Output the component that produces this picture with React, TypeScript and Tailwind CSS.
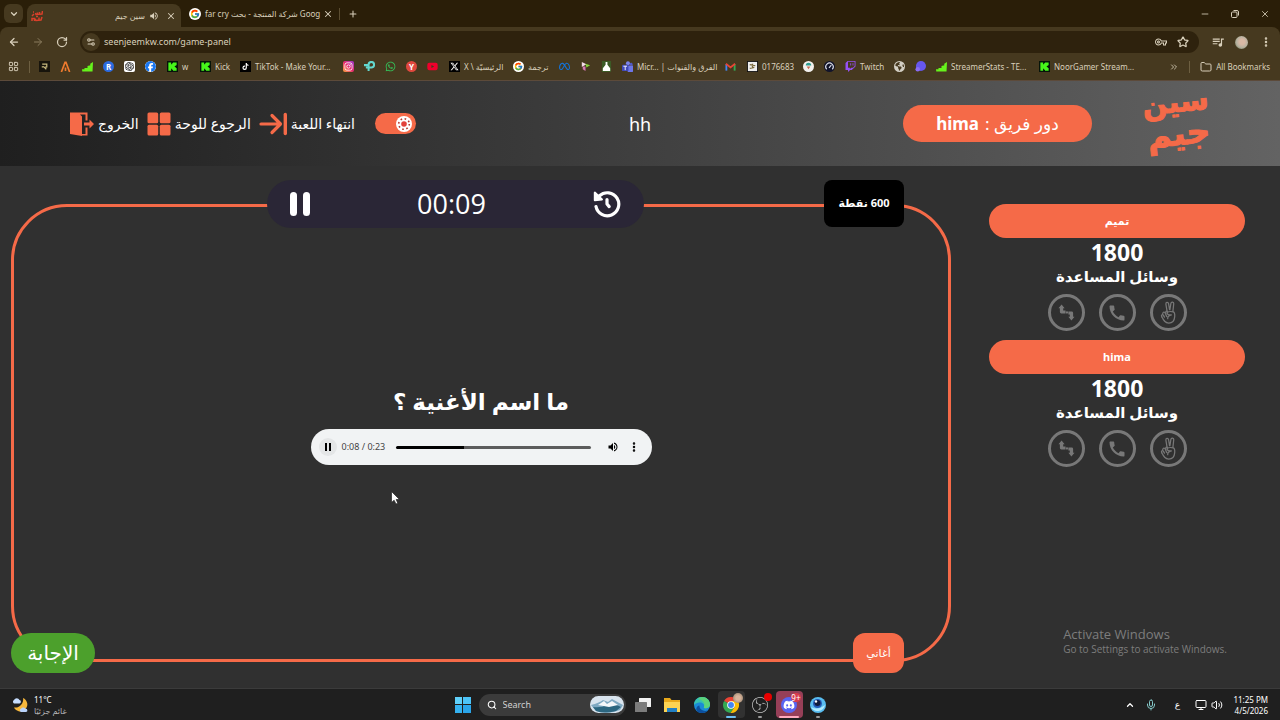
import type { ReactNode } from "react";
import {
  ArrowLeft,
  ArrowRight,
  ChevronDown,
  ChevronUp,
  ChevronsRight,
  EllipsisVertical,
  Folder,
  LayoutGrid,
  Mic,
  Minus,
  Monitor,
  Plus,
  RotateCw,
  Search,
  Settings2,
  Star,
  Volume2,
  X,
} from "lucide-react";
import {
  FaDiscord,
  FaEarthAmericas,
  FaFacebook,
  FaInstagram,
  FaMeta,
  FaTiktok,
  FaTwitch,
  FaWhatsapp,
  FaXTwitter,
  FaYoutube,
} from "react-icons/fa6";
import { FcGoogle } from "react-icons/fc";
import { MdCall, MdOutlineVpnKey, MdQueueMusic, MdVolumeUp } from "react-icons/md";
import { SiObsstudio, SiOpenai } from "react-icons/si";

type Bookmark = { name: string; icon: ReactNode; text?: string; width?: string };

const KickIcon = () => (
  <svg viewBox="0 0 12 12" className="size-[11px]">
    <rect width="12" height="12" fill="#06140a" />
    <path d="M1.500 1.500h3v2h1v-1h1v-1h4v3h-1v1h-1v1h1v1h1v3h-4v-1h-1v-1h-1v2h-3z" fill="#46f51a" />
  </svg>
);

const BarsIcon = () => (
  <svg viewBox="0 0 12 12" className="size-[11px]" fill="#66f31c">
    <path d="M0 9h2.700v2.500H.3zM2.700 7.500h3.300v4h-3.300zM6 5.500l3-1v7H6zM9 3L12 1l-.5 10.500H9z" />
  </svg>
);

const SiteIcon = () => (
  <svg viewBox="0 0 12 12" className="size-3" stroke="#d8402b" fill="none" strokeWidth="1.500">
    <path d="M11.500 1L11 4 5 4.500 4.500 3M8.500 2v2M6.500 2.500v2M3 4L1 6M2 2h1M11 7l-1 3-5 .5L4 9M8 7.500v2M1 11V8.500h2.500V11M5 6.500h2" />
  </svg>
);

const bookmarks: Bookmark[] = [
  {
    name: "Rewards",
    icon: (
      <svg viewBox="0 0 12 12" className="size-[11px]">
        <rect width="12" height="12" fill="#17140c" />
        <path d="M3.500 3.500h5v3L6 7l2 2M3 6.500h2.500" stroke="#c9bb80" fill="none" strokeWidth="1.300" />
      </svg>
    ),
  },
  {
    name: "Peaks",
    icon: (
      <svg viewBox="0 0 12 12" className="size-[11px]" fill="none" stroke="#f07b2e" strokeWidth="1.800">
        <path d="M1.500 12L5.500 1.500h1L10.500 12M6 7v4" />
      </svg>
    ),
    width: "w-3",
  },
  { name: "Stats", icon: <BarsIcon /> },
  {
    name: "R",
    icon: (
      <span className="flex size-[11px] items-center justify-center rounded-full bg-[#2c6be0] text-[8px] leading-none font-bold text-white">
        R
      </span>
    ),
  },
  { name: "ChatGPT", icon: <SiOpenai className="size-[11px] rounded-xs bg-white p-px text-black" /> },
  {
    name: "Facebook",
    icon: <FaFacebook className="size-[11px] rounded-full bg-white text-[#1877f2]" />,
    width: "w-3",
  },
  { name: "Kick w", icon: <KickIcon />, text: "w", width: "w-[23px]" },
  { name: "Kick", icon: <KickIcon />, text: "Kick", width: "w-[30px]" },
  {
    name: "TikTok",
    icon: <FaTiktok className="size-[11px] bg-black p-0.5 text-white" />,
    text: "TikTok - Make Your...",
    width: "w-[93px]",
  },
  {
    name: "Instagram",
    icon: (
      <FaInstagram className="size-[11px] rounded-xs bg-linear-to-tr from-[#fca02f] via-[#e8246f] to-[#9a2fd0] p-px text-white" />
    ),
  },
  {
    name: "Tip",
    icon: (
      <svg viewBox="0 0 12 12" className="size-[11px]" fill="none" stroke="#63d8cf" strokeWidth="2.200">
        <path d="M0 4.500h5M5 11V4a3 3 0 1 1 3 3H2" />
      </svg>
    ),
  },
  { name: "WhatsApp", icon: <FaWhatsapp className="size-[11px] text-[#35c25a]" /> },
  {
    name: "Y",
    icon: (
      <span className="flex size-[11px] items-center justify-center rounded-full bg-[#e0483e] text-[8px] leading-none font-bold text-white">
        Y
      </span>
    ),
  },
  { name: "YouTube", icon: <FaYoutube className="size-[11px] text-[#f0002c]" />, width: "w-3" },
  {
    name: "X",
    icon: <FaXTwitter className="size-[11px] bg-black p-px text-white" />,
    text: "X \\ الرئيسيّة",
    width: "w-[54px]",
  },
  {
    name: "Google",
    icon: <FcGoogle className="size-[11px] rounded-full bg-white p-px" />,
    text: "ترجمة",
    width: "w-[36px]",
  },
  { name: "Meta", icon: <FaMeta className="size-[11px] text-[#1473d8]" /> },
  {
    name: "Play",
    icon: (
      <svg viewBox="0 0 12 12" className="size-[11px]">
        <path d="M2 1l5 2.500-5 3z" fill="#f3d9e8" />
        <path d="M6 3l5 1.500L7 7z" fill="#86d43c" />
        <path d="M3 6h3v5L3 9z" fill="#d477b5" />
      </svg>
    ),
  },
  {
    name: "Flask",
    icon: (
      <svg viewBox="0 0 12 12" className="size-[11px]">
        <rect x="1" width="10" height="12" fill="#3c5a26" />
        <path d="M5 1h2v3l3 4v3H2V8l3-4z" fill="#fff" />
      </svg>
    ),
  },
  {
    name: "Teams",
    icon: (
      <svg viewBox="0 0 12 12" className="size-[11px]">
        <circle cx="6.500" cy="2.500" r="2.200" fill="#7b83eb" />
        <circle cx="10" cy="3.500" r="1.500" fill="#5059c9" />
        <path d="M4 5h8v4a3 3 0 0 1-6 2z" fill="#6d76e8" />
        <rect y="4" width="7" height="7" rx="1" fill="#4048b8" />
        <path d="M1.500 5.700h4M3.500 6v4" stroke="#fff" />
      </svg>
    ),
    text: "Micr... | الفرق والقنوات",
    width: "w-[93px]",
  },
  {
    name: "Gmail",
    icon: (
      <svg viewBox="0 0 12 12" className="size-[11px]" fill="none" strokeWidth="2">
        <path d="M1.500 10.500v-7" stroke="#4285f4" />
        <path d="M10.500 10.500v-7" stroke="#34a853" />
        <path d="M1 3l5 4 5-4" stroke="#ea4335" />
      </svg>
    ),
    width: "w-3",
  },
  {
    name: "0176683",
    icon: (
      <svg viewBox="0 0 12 12" className="size-[11px]">
        <rect width="12" height="12" fill="#111" />
        <rect x="1" y="1" width="10" height="10" fill="#eee" />
        <path d="M3 4l6 1M3 8l5-1M6 3v5" stroke="#7b6a3c" strokeWidth="1.500" />
      </svg>
    ),
    text: "0176683",
    width: "w-[46px]",
  },
  {
    name: "Profile",
    icon: (
      <svg viewBox="0 0 12 12" className="size-[11px]">
        <circle cx="6" cy="6" r="6" fill="#f3f1ee" />
        <path d="M3 5a3 3 0 0 1 6 0z" fill="#2d9c8f" />
        <path d="M4 6h4l-2 3z" fill="#c9694f" />
      </svg>
    ),
  },
  {
    name: "Gauge",
    icon: (
      <svg viewBox="0 0 12 12" className="size-[11px]" fill="none" stroke="#d9dce8">
        <circle cx="6" cy="6" r="6" fill="#12142a" stroke="none" />
        <path d="M3 9a4 4 0 1 1 6 0M5.500 7.500L8 4.500" strokeWidth="1.300" />
      </svg>
    ),
  },
  {
    name: "Twitch",
    icon: <FaTwitch className="size-[11px] text-[#9650f5]" />,
    text: "Twitch",
    width: "w-[39px]",
  },
  { name: "Web", icon: <FaEarthAmericas className="size-[11px] text-[#d3cfc4]" /> },
  {
    name: "Orb",
    icon: (
      <svg viewBox="0 0 12 12" className="size-[11px]">
        <circle cx="6.500" cy="5.500" r="5.500" fill="#6657ee" />
        <circle cx="3" cy="9" r="2.500" fill="#8a6cf5" />
      </svg>
    ),
  },
  { name: "StreamerStats", icon: <BarsIcon />, text: "StreamerStats - TE...", width: "w-[93px]" },
  { name: "NoorGamer", icon: <KickIcon />, text: "NoorGamer Stream...", width: "w-[93px]" },
];

const BrowserChrome = () => (
  <div className="bg-[#2a1e08] text-[#d9d0bb]">
    <div className="flex h-[27px] items-end justify-between">
      <div className="flex h-full items-center">
        <button aria-label="Search tabs" className="ml-1 flex size-[19px] items-center justify-center rounded-md bg-[#46391f]">
          <ChevronDown className="size-2.5" strokeWidth={3} />
        </button>
        <div className="ml-1 flex h-[23px] w-[154px] items-center self-end rounded-t-lg bg-[#46391f] px-1 text-[8px]">
          <SiteIcon />
          <span dir="rtl" className="ml-auto">
            سين جيم
          </span>
          <MdVolumeUp className="ml-1 size-2.5" />
          <button aria-label="Close tab" className="ml-1.5 flex size-3 items-center justify-center">
            <X className="size-2.5" strokeWidth={2.5} />
          </button>
        </div>
        <div className="flex w-[154px] items-center pl-2 text-[8px]">
          <FcGoogle className="size-3 shrink-0 rounded-full bg-white p-px" />
          <span className="ml-1 w-[117px] whitespace-nowrap">far cry شركة المنتجة - بحث Goog</span>
          <button aria-label="Close tab" className="flex size-3 items-center justify-center">
            <X className="size-2.5" strokeWidth={2.5} />
          </button>
        </div>
        <span className="mx-1 h-3 w-px bg-[#5b4d31]" />
        <button aria-label="New tab" className="ml-1">
          <Plus className="size-2.5" strokeWidth={2.5} />
        </button>
      </div>
      <div className="flex h-full items-center gap-5 pr-2.5">
        <button aria-label="Minimize">
          <Minus className="size-2.5" />
        </button>
        <button aria-label="Restore">
          <svg viewBox="0 0 10 10" className="size-2.5" fill="none" stroke="currentColor">
            <rect x="1.500" y="3" width="5.500" height="5.500" rx="1" />
            <path d="M3.500 1.500H7A1.500 1.500 0 0 1 8.500 3v3.500" />
          </svg>
        </button>
        <button aria-label="Close">
          <X className="size-2.5" />
        </button>
      </div>
    </div>

    <div className="flex h-[30px] items-center rounded-t-lg bg-[#46391f] pr-2">
      <button aria-label="Back" className="ml-2">
        <ArrowLeft className="size-3" strokeWidth={2.5} />
      </button>
      <button aria-label="Forward" className="ml-3 text-[#8a7c5e]">
        <ArrowRight className="size-3" />
      </button>
      <button aria-label="Reload" className="ml-3">
        <RotateCw className="size-3" strokeWidth={2.5} />
      </button>
      <div className="ml-3 flex h-[22px] flex-1 items-center rounded-full bg-[#2e220d] pr-2.5 pl-0.5">
        <span className="flex size-[18px] items-center justify-center rounded-full bg-[#46391f]">
          <Settings2 className="size-2.5" strokeWidth={2.5} />
        </span>
        <input
          aria-label="Address"
          className="ml-1 flex-1 text-[9px] outline-none"
          defaultValue="seenjeemkw.com/game-panel"
        />
        <MdOutlineVpnKey className="size-3" />
        <Star className="ml-2.5 size-3" strokeWidth={2.5} />
      </div>
      <MdQueueMusic className="ml-3 size-3.5" />
      <span className="ml-2.5 size-[13px] rounded-full bg-[radial-gradient(circle_at_55%_45%,#d9b9a5_25%,#b7b2a0_55%,#5a6b45)]" />
      <EllipsisVertical className="ml-3 size-3" strokeWidth={3} />
    </div>

    <div className="flex h-6 items-center gap-2.5 overflow-hidden border-b border-[#5c4a3a] bg-[#46391f] pr-2.5 pb-1 pl-2 text-[8px] whitespace-nowrap">
      <LayoutGrid className="size-[11px] shrink-0" />
      <span className="-mr-px h-3 w-px shrink-0 bg-[#6d5f41]" />
      {bookmarks.map((b) => (
        <a
          key={b.name}
          href="#"
          aria-label={b.name}
          className={`flex shrink-0 items-center gap-1 [&>svg]:shrink-0 ${b.width ?? "w-[11px]"}`}
        >
          {b.icon}
          {b.text && <span>{b.text}</span>}
        </a>
      ))}
      <ChevronsRight className="ml-auto size-2.5 shrink-0" />
      <span className="h-3 w-px shrink-0 bg-[#6d5f41]" />
      <a href="#" className="flex shrink-0 items-center gap-1">
        <Folder className="size-3" />
        All Bookmarks
      </a>
    </div>
  </div>
);

const ExitIcon = () => (
  <svg viewBox="0 0 24 24" className="size-6 shrink-0" fill="#f56a48">
    <path d="M0 .5h17.500v8h-2V2.500H10l2 2v17.500h3.500v-6.500h2V23.500h-5.500V24L0 22z" />
    <path d="M14 10.500h5.500V7.500L24 12l-4.500 4.500v-3H14z" />
  </svg>
);

const BoardIcon = () => (
  <svg viewBox="0 0 24 24" className="size-6 shrink-0" fill="#f56a48">
    <rect x=".5" y=".5" width="10.700" height="10.700" rx="1.500" />
    <rect x="12.800" y=".5" width="10.700" height="10.700" rx="1.500" />
    <rect x=".5" y="12.800" width="10.700" height="10.700" rx="1.500" />
    <rect x="12.800" y="12.800" width="10.700" height="10.700" rx="1.500" />
  </svg>
);

const EndIcon = () => (
  <svg
    viewBox="0 0 28 24"
    className="h-6 w-7 shrink-0"
    fill="none"
    stroke="#f56a48"
    strokeWidth="3.200"
    strokeLinecap="round"
    strokeLinejoin="round"
  >
    <path d="M2 12h19M13 3.500l8.500 8.500L13 20.500" />
    <path d="M26.300 2.500v19" strokeWidth="3.400" />
  </svg>
);

const GameHeader = () => (
  <header className="grid h-[85px] grid-cols-[1fr_auto_1fr] items-center bg-linear-to-r from-[#1f1f1f] to-[#636363] px-[70px] text-white">
    <div className="flex items-center gap-2 text-[14px] whitespace-nowrap">
      <button className="flex items-center gap-1">
        <ExitIcon />
        <span>الخروج</span>
      </button>
      <button className="flex items-center gap-1">
        <BoardIcon />
        <span>الرجوع للوحة</span>
      </button>
      <button className="flex items-center gap-1">
        <EndIcon />
        <span>انتهاء اللعبة</span>
      </button>
      <label className="relative ml-3 flex h-[21px] w-[41px] items-center justify-end rounded-full bg-[#f56a48] pr-1">
        <input type="checkbox" role="switch" aria-label="Theme" defaultChecked className="absolute inset-0 opacity-0" />
        <svg viewBox="0 0 16 16" className="size-4">
          <circle cx="8" cy="8" r="8" fill="#fff" />
          <circle cx="8" cy="8" r="2.800" fill="#e2413b" />
          <circle cx="8" cy="8" r="5.300" fill="none" stroke="#b5382f" strokeWidth="1.600" strokeDasharray="1.600 2.560" />
        </svg>
      </label>
    </div>
    <h1 className="text-lg">hh</h1>
    <div className="flex items-center justify-end gap-[53px]">
      <div
        dir="rtl"
        className="flex h-[37px] w-[189px] items-center justify-center gap-1.5 rounded-full bg-[#f56a48] text-[17px] whitespace-nowrap"
      >
        <span>دور فريق :</span>
        <b>hima</b>
      </div>
      <div
        dir="rtl"
        className="flex w-[65px] -rotate-6 flex-col items-center pb-3 font-['DejaVu_Sans',sans-serif] font-bold text-[#f56a48] [-webkit-text-stroke:1px_#f56a48]"
      >
        <span className="text-[29px] leading-8">سين</span>
        <span className="text-[33px] leading-8">جيم</span>
      </div>
    </div>
  </header>
);

const SwapIcon = () => (
  <svg viewBox="0 0 18 18" className="size-[17px]" fill="#787878">
    <path d="M3.800.5L7 4.500H5.500V7H8v3H3.500a1.500 1.500 0 0 1-1.500-1.500v-4H.5z" />
    <path d="M11 8h3.500A1.500 1.500 0 0 1 16 9.500v4h1.500L14.200 17.500 11 13.500h1.500V11H11z" />
    <circle cx="9.500" cy="9" r="1.200" />
  </svg>
);

const PeaceIcon = () => (
  <svg
    viewBox="0 0 16 24"
    className="h-[23px] w-4"
    fill="none"
    stroke="#787878"
    strokeWidth="1.300"
    strokeLinecap="round"
    strokeLinejoin="round"
  >
    <path d="M7 10.500L5.800 3.200c-.3-2 2.400-2.500 2.800-.5l1 6.300M10 9l1-6.500c.4-2 3.200-1.600 3 .4l-.9 8" />
    <path d="M7 12.500c1-2 5-1.500 6.500-1.200 1.500.5 1.700 2.500 1.500 5C14.700 20.500 12.500 23 8.800 23 5 23 3.500 20.500 1.500 16.500" />
    <path d="M1.500 16.500c-1-2 .8-3 1.800-1.500l1 1.800M2.600 14.200c-.8-2.500 1.700-3.600 2.600-1.500l1.400 3.500M5.600 11.500c.6-1.400 1.600-1 2-.3M7 12.500c0 2 2 2 4.500 2-2.500.5-4 2-3.800 4" />
  </svg>
);

const helpers = [
  { name: "Swap", icon: <SwapIcon /> },
  { name: "Call", icon: <MdCall className="size-5" /> },
  { name: "Two answers", icon: <PeaceIcon /> },
];

const TeamCard = ({ name, score }: { name: string; score: number }) => (
  <section className="flex flex-col items-center text-white">
    <h2 className="flex h-[34px] w-full items-center justify-center rounded-full bg-[#f56a48] text-[11px] font-bold">
      {name}
    </h2>
    <p className="text-[23px] leading-7 font-bold">{score}</p>
    <p className="text-[15px] leading-5 font-bold">وسائل المساعدة</p>
    <div className="mt-2 mb-[9px] flex gap-3.5">
      {helpers.map((h) => (
        <button
          key={h.name}
          aria-label={h.name}
          className="flex size-[37px] items-center justify-center rounded-full border-3 border-[#787878] text-[#787878]"
        >
          {h.icon}
        </button>
      ))}
    </div>
  </section>
);

const AudioPlayer = () => (
  <div className="flex h-9 w-[341px] items-center rounded-full bg-[#f1f3f4] pr-3 pl-2 text-[#444]">
    <button aria-label="Pause" className="flex size-[18px] items-center justify-center gap-0.5 rounded-full bg-[#e4e6e7]">
      <span className="h-2 w-0.5 bg-black" />
      <span className="h-2 w-0.5 bg-black" />
    </button>
    <span className="ml-[5px] w-[54px] text-[9px] whitespace-nowrap">0:08 / 0:23</span>
    <input
      type="range"
      aria-label="Seek"
      min={0}
      max={23}
      defaultValue={8}
      className="h-[3px] min-w-0 flex-1 appearance-none rounded-full bg-linear-to-r from-black from-35% to-[#5c5c5c] to-35% [&::-webkit-slider-thumb]:size-0 [&::-webkit-slider-thumb]:appearance-none"
    />
    <button aria-label="Mute" className="ml-4 text-black">
      <MdVolumeUp className="size-3" />
    </button>
    <button aria-label="More" className="ml-[9px] text-black">
      <EllipsisVertical className="size-3" strokeWidth={3} />
    </button>
  </div>
);

const QuestionPanel = () => (
  <section className="relative flex flex-1 flex-col items-center justify-center rounded-[56px] border-3 border-[#f56a48] pb-[18px] text-white">
    <div className="absolute inset-x-0 -top-[27px] flex items-start justify-between pr-11 pl-[253px]">
      <div className="flex h-12 w-[377px] items-center justify-between rounded-full bg-[#2a2636] px-[23px]">
        <button aria-label="Pause timer" className="flex gap-1.5">
          <span className="h-6 w-[7px] rounded-full bg-white" />
          <span className="h-6 w-[7px] rounded-full bg-white" />
        </button>
        <span className="font-['Open_Sans',sans-serif] text-[27px]">00:09</span>
        <button aria-label="Reset timer">
          <svg
            viewBox="0 0 28 28"
            className="size-7"
            fill="none"
            stroke="#fff"
            strokeWidth="3.200"
            strokeLinecap="round"
            strokeLinejoin="round"
          >
            <path d="M6.500 5.800A11.500 11.500 0 1 1 3 16.500" />
            <path d="M1.800 2.600v7.600l7.200-.8z" fill="#fff" strokeWidth="2" />
            <path d="M14 9.500V14l2.200 2.600" />
          </svg>
        </button>
      </div>
      <div className="flex h-[47px] w-20 items-center justify-center rounded-lg bg-black text-[11px] font-bold" dir="rtl">
        600 نقطة
      </div>
    </div>

    <h2 dir="rtl" className="mb-2.5 text-[23px] leading-9 font-bold">
      ما اسم الأغنية ؟
    </h2>
    <AudioPlayer />

    <div className="absolute -right-[3px] -bottom-3.5 -left-[3px] flex items-center justify-between pr-[47px]">
      <button className="h-10 w-[84px] rounded-full bg-[#4ca02c] text-[20px] leading-none">الإجابة</button>
      <span className="flex h-10 w-[51px] items-center justify-center rounded-xl bg-[#f56a48] text-[11px]">أغاني</span>
    </div>
  </section>
);

const EdgeIcon = () => (
  <svg viewBox="0 0 16 16" className="size-4">
    <circle cx="8" cy="8" r="8" fill="#1b8ad6" />
    <path d="M0 8C0 3.500 3.500 0 8 0s8 3.500 8 7.500c0 3-2.500 4-5 3.700-1.600-.2-1.200-1-.8-1.900C10.800 7 8 5 5 5.500 2.500 6 .7 7 0 8z" fill="#37c2b0" />
    <path d="M8 0c4.500 0 8 3.500 8 7.500 0 3-2.500 4-5 3.700-1.600-.2-1.200-1-.8-1.900C11 6 9 3 4 2 5 .8 6.500 0 8 0z" fill="#5bd37b" />
    <path d="M5.500 8.500c-.5 4 4 6.500 8.500 5A8 8 0 0 1 3 14.200C1 11.500 3.500 8.500 5.500 8.500z" fill="#0c4f9e" />
  </svg>
);

const ChromeIcon = () => (
  <svg viewBox="0 0 18 18" className="size-4">
    <path d="M9 9L1.200 4.500A9 9 0 0 1 16.800 4.500H9z" fill="#ea4335" />
    <path d="M9 9L1.200 4.500A9 9 0 0 0 8.500 18L13 11z" fill="#34a853" />
    <path d="M9 4.500h7.800A9 9 0 0 1 8.500 18l4.400-6.800z" fill="#fbbc05" />
    <circle cx="9" cy="9" r="4.300" fill="#fff" />
    <circle cx="9" cy="9" r="3.300" fill="#4285f4" />
  </svg>
);

const Taskbar = () => (
  <footer className="grid h-8 grid-cols-[1fr_auto_1fr] items-center border-t border-[#3b3b3b] bg-[#1f1f1f] px-3 text-[9px] leading-[11px] text-white">
    <div className="flex items-center gap-1.5">
      <svg viewBox="0 0 16 16" className="size-4">
        <path d="M11 1a7 7 0 1 1-9 9.500A8 8 0 0 0 11 1z" fill="#f6b73c" />
        <path d="M2 6.500a2 2 0 0 1 0-3.500 3 3 0 0 1 5.500 0 1.800 1.800 0 0 1 0 3.500z" fill="#c6ddff" />
        <path d="M9 15a1.700 1.700 0 0 1 0-3.200 2.500 2.500 0 0 1 4.500 0A1.600 1.600 0 0 1 14 15z" fill="#b9d3fb" />
      </svg>
      <div className="flex flex-col items-start text-[8px]">
        <span>11°C</span>
        <span className="text-[#b5b5b5]">غائم جزئيًا</span>
      </div>
    </div>

    <div className="flex items-center pl-1.5">
      <button aria-label="Start" className="grid size-4 grid-cols-2 gap-px">
        <span className="bg-[#5fd0fa]" />
        <span className="bg-[#4cc4f8]" />
        <span className="bg-[#35b2f0]" />
        <span className="bg-[#2aa5ea]" />
      </button>
      <div className="ml-2 flex h-[22px] w-[147px] items-center gap-1.5 rounded-full bg-[#3b3b3b] pr-0.5 pl-2">
        <Search className="size-2.5 shrink-0" strokeWidth={2.5} />
        <input aria-label="Search" placeholder="Search" className="min-w-0 flex-1 text-[9px] outline-none placeholder:text-[#d0d0d0]" />
        <svg viewBox="0 0 34 17" className="h-[17px] w-[34px] shrink-0">
          <rect width="34" height="17" rx="8.500" fill="#d9e4ee" />
          <path d="M1 9q8-2 12-5l5 2 4-3 11 6-3 5q-12 5-24 1z" fill="#7fa9c2" />
          <path d="M3 11q8 1 14-2t14 2l-5 4q-12 3-20 0z" fill="#2c6680" />
          <path d="M8 9l6-4 3 3 5-3 6 4-9 2z" fill="#f4f7fa" />
        </svg>
      </div>
      <div className="ml-1 flex items-center gap-0.5">
        <button aria-label="Task view" className="flex h-[27px] w-[27px] items-center justify-center">
          <svg viewBox="0 0 16 16" className="size-4">
            <rect x="4" y="1" width="12" height="9" rx=".5" fill="#f1f1f1" />
            <rect y="5" width="12" height="10" rx=".5" fill="#7c7c7c" />
          </svg>
        </button>
        <button aria-label="Files" className="flex h-[27px] w-[27px] items-center justify-center">
          <svg viewBox="0 0 16 16" className="size-4">
            <path d="M0 1h6l1.500 2H16v12H0z" fill="#e9a91b" />
            <path d="M0 5h16v10H0z" fill="#fcd353" />
            <path d="M3 11h10v4H3z" fill="#2280c4" />
          </svg>
        </button>
        <button aria-label="Edge" className="flex h-[27px] w-[28px] items-center justify-center">
          <EdgeIcon />
        </button>
        <button aria-label="Chrome" className="relative flex h-[27px] w-[27px] items-center justify-center rounded-sm bg-[#313131]">
          <ChromeIcon />
          <span className="absolute top-0.5 right-0.5 size-2.5 rounded-full bg-[radial-gradient(circle,#d9b59c_30%,#8a7a64)]" />
          <span className="absolute bottom-0 h-0.5 w-2.5 rounded-full bg-[#6cc0f5]" />
        </button>
        <button aria-label="OBS" className="relative flex h-[27px] w-[27px] items-center justify-center">
          <SiObsstudio className="size-4 text-[#c4c4c4]" />
          <span className="absolute top-0.5 right-0.5 size-2 rounded-full bg-[#e80000]" />
          <span className="absolute bottom-0 h-0.5 w-1 rounded-full bg-[#9a9a9a]" />
        </button>
        <button aria-label="Discord" className="relative flex h-[27px] w-[27px] items-center justify-center rounded-sm bg-[#963f58]">
          <FaDiscord className="size-4 rounded-full bg-[#5865f2] p-0.5" />
          <span className="absolute top-0.5 right-0.5 rounded-full bg-[#d83c4e] text-[8px] leading-[9px]">9+</span>
          <span className="absolute bottom-0 h-0.5 w-5 rounded-full bg-[#ffa9bd]" />
        </button>
        <button aria-label="Player" className="relative flex h-[27px] w-[27px] items-center justify-center">
          <svg viewBox="0 0 16 16" className="size-4">
            <circle cx="8" cy="8" r="8" fill="#59bdf0" />
            <path d="M1 10q7 4 14-2a7.500 7.500 0 0 1-14 2z" fill="#b3ecff" />
            <circle cx="7.500" cy="6.500" r="4.500" fill="#2459b8" />
            <circle cx="7.500" cy="6" r="3" fill="#101b3c" />
            <circle cx="6" cy="4.500" r="1.200" fill="#fff" />
          </svg>
          <span className="absolute bottom-0 h-0.5 w-1 rounded-full bg-[#9a9a9a]" />
        </button>
      </div>
    </div>

    <div className="flex items-center justify-end">
      <ChevronUp className="size-2.5" strokeWidth={3} />
      <Mic className="ml-2.5 size-3 text-[#86c9c9]" />
      <span className="ml-3.5 w-3 text-center">ع</span>
      <Monitor className="ml-3 size-3" />
      <Volume2 className="ml-1 size-3" />
      <div className="ml-2.5 text-right text-[8px]">
        <p>11:25 PM</p>
        <p>4/5/2026</p>
      </div>
    </div>
  </footer>
);

export default function App() {
  return (
    <div className="flex min-h-screen flex-col bg-[#303030] font-['Noto_Sans','DejaVu_Sans',sans-serif]">
      <BrowserChrome />
      <GameHeader />
      <main className="relative flex flex-1 gap-[38px] pt-[38px] pr-[35px] pb-[26px] pl-[11px]">
        <QuestionPanel />
        <aside className="w-64">
          <TeamCard name="تميم" score={1800} />
          <TeamCard name="hima" score={1800} />
        </aside>
        <div className="absolute right-[53px] bottom-8 font-['Open_Sans',sans-serif] text-[#7d7d7d]">
          <p className="text-[13px] leading-4">Activate Windows</p>
          <p className="text-[10px] leading-[14px]">Go to Settings to activate Windows.</p>
        </div>
        <svg viewBox="0 0 9 14" className="absolute top-[325px] left-[391px] h-3.5 w-[9px]">
          <path d="M.5.5v11l2.600-2.300L5 13l1.800-.8L5.200 8.500h3.300z" fill="#fff" stroke="#222" strokeWidth=".7" />
        </svg>
      </main>
      <Taskbar />
    </div>
  );
}
